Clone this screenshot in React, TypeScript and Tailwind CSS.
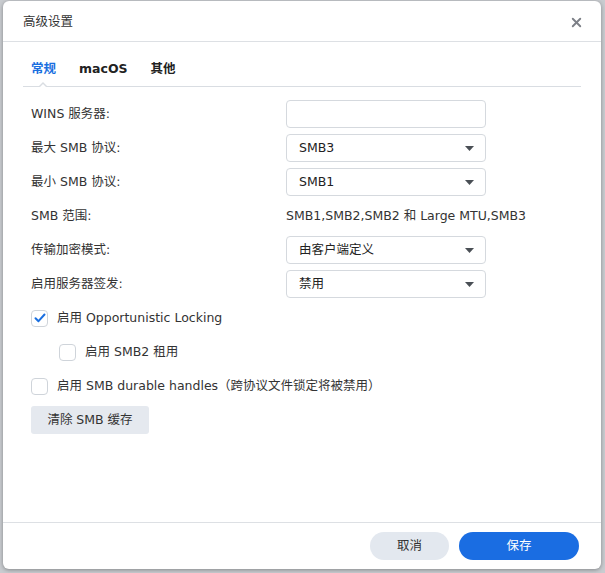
import { X } from "lucide-react";

const font = { fontFamily: '"DejaVu Sans", "Noto Sans CJK SC", sans-serif' };

function Caret() {
  return (
    <svg width="9" height="5" viewBox="0 0 9 5" className="shrink-0">
      <path d="M0 0h9L4.5 5z" fill="#4a4f55" />
    </svg>
  );
}

function Select({ value }: { value: string }) {
  return (
    <div className="flex h-[28px] w-[200px] items-center justify-between rounded-[4px] border border-[#d5d9de] bg-white pl-[12px] pr-[11px] text-[12.5px] text-[#222]">
      <span>{value}</span>
      <Caret />
    </div>
  );
}

function Row({ label, children }: { label: string; children: React.ReactNode }) {
  return (
    <div className="flex h-[34px] items-center">
      <div className="w-[255px] text-[12.5px] text-[#333]">{label}</div>
      {children}
    </div>
  );
}

function Check({ checked, label, indent }: { checked?: boolean; label: string; indent?: boolean }) {
  return (
    <div className={`flex h-[34px] items-center gap-[9px] ${indent ? "pl-[28px]" : ""}`}>
      <div className="flex h-[17px] w-[17px] items-center justify-center rounded-[4px] border border-[#cfd4da] bg-white">
        {checked && (
          <svg width="12" height="10" viewBox="0 0 12 10">
            <path d="M1.5 5.2 4.5 8.2 10.5 1.5" fill="none" stroke="#1a6fe0" strokeWidth="2" strokeLinecap="round" strokeLinejoin="round" />
          </svg>
        )}
      </div>
      <span className="text-[12.5px] text-[#333]">{label}</span>
    </div>
  );
}

export default function App() {
  return (
    <div className="h-[573px] w-[605px] overflow-hidden bg-[#c9ccd0] pl-[3px] pr-[4px] pt-[1px]" style={font}>
      <div className="flex h-[568px] flex-col rounded-[6px] bg-white shadow-[0_1px_4px_rgba(0,0,0,0.35)]">
        <div className="flex h-[41px] items-center justify-between border-b border-[#dde0e4] pl-[20px] pr-[17px] pt-[2px]">
          <span className="text-[12.5px] text-[#333]">高级设置</span>
          <X size={15} strokeWidth={3} color="#7d8087" />
        </div>

        <div className="flex-1 px-[20px]">
          <div className="relative flex h-[45px] items-center gap-[23px] border-b border-[#d9dde2] pl-[8px] pt-[10px] text-[12.5px] font-bold">
            <span className="text-[#1a6fe0]">常规</span>
            <span className="text-[#222]">macOS</span>
            <span className="text-[#222]">其他</span>
            <div className="absolute bottom-[-1px] left-[15px] h-0 w-0 border-x-[5px] border-b-[5px] border-x-transparent border-b-[#d9dde2]" />
            <div className="absolute bottom-[-2px] left-[16px] h-0 w-0 border-x-[4px] border-b-[4px] border-x-transparent border-b-white" />
          </div>

          <div className="pl-[8px] pt-[10px]">
            <Row label="WINS 服务器:">
              <div className="h-[28px] w-[200px] rounded-[4px] border border-[#d5d9de] bg-white" />
            </Row>
            <Row label="最大 SMB 协议:">
              <Select value="SMB3" />
            </Row>
            <Row label="最小 SMB 协议:">
              <Select value="SMB1" />
            </Row>
            <Row label="SMB 范围:">
              <span className="text-[12.5px] text-[#333]">SMB1,SMB2,SMB2 和 Large MTU,SMB3</span>
            </Row>
            <Row label="传输加密模式:">
              <Select value="由客户端定义" />
            </Row>
            <Row label="启用服务器签发:">
              <Select value="禁用" />
            </Row>

            <Check checked label="启用 Opportunistic Locking" />
            <Check indent label="启用 SMB2 租用" />
            <Check label="启用 SMB durable handles（跨协议文件锁定将被禁用）" />

            <button className="mt-[3px] h-[28px] w-[118px] rounded-[3px] bg-[#e5e9ef] text-[12.5px] text-[#333]">
              清除 SMB 缓存
            </button>
          </div>
        </div>

        <div className="flex h-[47px] items-center justify-end gap-[10px] border-t border-[#dde0e4] pr-[22px]">
          <button className="h-[28px] w-[79px] rounded-full bg-[#e3e8ef] text-[12.5px] text-[#333]">取消</button>
          <button className="h-[28px] w-[120px] rounded-full bg-[#1a6de2] text-[12.5px] text-white">保存</button>
        </div>
      </div>
    </div>
  );
}
